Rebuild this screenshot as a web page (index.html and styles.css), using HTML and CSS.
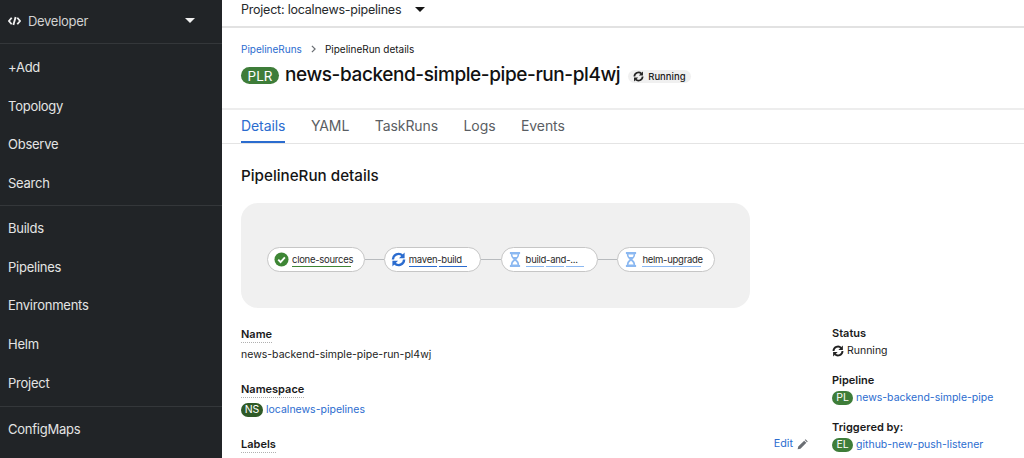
FILE: index.html
```html
<!DOCTYPE html>
<html lang="en">
<head>
<meta charset="utf-8">
<title>PipelineRun details</title>
<link rel="stylesheet" href="styles.css">
</head>
<body>
<div class="app">
  <aside class="sidebar">
    <div class="switcher">
      <svg class="code-icon" viewBox="0 0 14 10" width="13" height="10"><path d="M4 1.500 1 5l3 3.500M10 1.500 13 5l-3 3.500M8.200.6 5.800 9.400" fill="none" stroke="#f0f0f0" stroke-width="2"/></svg>
      <span class="switcher-label">Developer</span>
      <span class="caret caret-light"></span>
    </div>
    <nav class="nav-group">
      <a class="nav-item">+Add</a>
      <a class="nav-item">Topology</a>
      <a class="nav-item">Observe</a>
      <a class="nav-item">Search</a>
    </nav>
    <nav class="nav-group">
      <a class="nav-item">Builds</a>
      <a class="nav-item">Pipelines</a>
      <a class="nav-item">Environments</a>
      <a class="nav-item">Helm</a>
      <a class="nav-item">Project</a>
    </nav>
    <nav class="nav-group">
      <a class="nav-item">ConfigMaps</a>
    </nav>
  </aside>
  <main class="main">
    <div class="project-bar">
      <span>Project: localnews-pipelines</span>
      <span class="caret caret-dark"></span>
    </div>
    <header class="page-head">
      <div class="breadcrumb">
        <a class="link">PipelineRuns</a>
        <svg class="crumb-sep" viewBox="0 0 6 10" width="5" height="8"><path d="M1 1l4 4-4 4" fill="none" stroke="#6a6e73" stroke-width="1.500"/></svg>
        <span>PipelineRun details</span>
      </div>
      <div class="title-row">
        <span class="badge badge-title">PLR</span>
        <h1 class="title">news-backend-simple-pipe-run-pl4wj</h1>
        <span class="status-pill">
          <svg viewBox="0 0 16 16" width="11" height="11"><use href="#sync"/></svg>
          Running
        </span>
      </div>
    </header>
    <div class="tabs">
      <a class="tab tab-active">Details</a>
      <a class="tab">YAML</a>
      <a class="tab">TaskRuns</a>
      <a class="tab">Logs</a>
      <a class="tab">Events</a>
    </div>
    <section class="content">
      <h2 class="section-title">PipelineRun details</h2>
      <div class="graph">
        <div class="node">
          <svg viewBox="0 0 16 16" width="15" height="15"><circle cx="8" cy="8" r="7.500" fill="#3e8635"/><path d="M4.500 8.200 7 10.700l4.600-4.900" fill="none" stroke="#fff" stroke-width="2"/></svg>
          <span class="node-text">clone-sources<span class="bars"><i class="bar green"></i></span></span>
        </div>
        <span class="edge"></span>
        <div class="node">
          <svg class="blue-icon" viewBox="0 0 16 16" width="15" height="15"><use href="#sync"/></svg>
          <span class="node-text">maven-build<span class="bars"><i class="bar blue"></i><i class="bar blue"></i></span></span>
        </div>
        <span class="edge"></span>
        <div class="node">
          <svg class="glass" viewBox="0 0 12 16" width="12" height="15"><use href="#hourglass"/></svg>
          <span class="node-text">build-and-...<span class="bars"><i class="bar pale"></i><i class="bar pale"></i><i class="bar pale"></i></span></span>
        </div>
        <span class="edge"></span>
        <div class="node">
          <svg class="glass" viewBox="0 0 12 16" width="12" height="15"><use href="#hourglass"/></svg>
          <span class="node-text">helm-upgrade<span class="bars"><i class="bar pale"></i></span></span>
        </div>
      </div>
      <div class="details">
        <div class="col-left">
          <div class="field">
            <div class="term dotted">Name</div>
            <div class="value">news-backend-simple-pipe-run-pl4wj</div>
          </div>
          <div class="field">
            <div class="term dotted">Namespace</div>
            <div class="value"><span class="badge badge-ns">NS</span><a class="link">localnews-pipelines</a></div>
          </div>
          <div class="field-labels">
            <div class="term dotted">Labels</div>
            <a class="link edit">Edit
              <svg viewBox="0 0 14 14" width="11" height="11"><path d="M.8 13.200l.8-3.600 7.500-7.500 2.800 2.800-7.500 7.500zM9.900 1.300l1-1 2.800 2.800-1 1z" fill="#6a6e73"/></svg>
            </a>
          </div>
        </div>
        <div class="col-right">
          <div class="field-r">
            <div class="term">Status</div>
            <div class="value status-value"><svg viewBox="0 0 16 16" width="12" height="12"><use href="#sync"/></svg>Running</div>
          </div>
          <div class="field-r">
            <div class="term">Pipeline</div>
            <div class="value"><span class="badge badge-res">PL</span><a class="link">news-backend-simple-pipe</a></div>
          </div>
          <div class="field-last">
            <div class="term">Triggered by:</div>
            <div class="value"><span class="badge badge-res">EL</span><a class="link">github-new-push-listener</a></div>
          </div>
        </div>
      </div>
    </section>
  </main>
</div>
<svg class="defs" width="0" height="0">
  <symbol id="sync" viewBox="0 0 16 16"><path d="M2 8a6 6 0 0 1 10.200-4.200M14 8a6 6 0 0 1-10.200 4.200" fill="none" stroke="currentColor" stroke-width="2.500"/><path d="M14.500.6v6h-6zM1.500 15.400v-6h6z" fill="currentColor"/></symbol>
  <symbol id="hourglass" viewBox="0 0 12 16"><path d="M.5 0h11v2.200h-1c0 3-1.600 4.600-3 5.800 1.400 1.200 3 2.800 3 5.800h1V16H.5v-2.200h1c0-3 1.600-4.600 3-5.800-1.400-1.200-3-2.800-3-5.800h-1z" fill="#8bb8f1"/><path d="M3.200 2.600h5.600c-.1 1.200-.5 2-1 2.600H4.200c-.5-.6-.9-1.400-1-2.600zM6 9.400c1.300 1 2.300 2 2.700 3.800H3.300C3.700 11.400 4.700 10.400 6 9.400z" fill="#fff"/></symbol>
</svg>
</body>
</html>
```
FILE: styles.css
```css
* { box-sizing: border-box; }
html, body { margin: 0; height: 100%; overflow: hidden; }
body { font-family: Inter, "Liberation Sans", sans-serif; font-size: 12px; color: #151515; background: #fff; }
.app { display: flex; height: 458px; }
.defs { position: absolute; }

.sidebar { flex: 0 0 222px; background: #212427; color: #f0f0f0; overflow: hidden; }
.switcher { display: flex; align-items: center; height: 44px; padding: 0 27px 2px 8px; border-bottom: 1px solid #34373a; }
.code-icon { margin-right: 7px; }
.switcher-label { flex: 1; font-size: 13px; letter-spacing: -0.3px; color: #d2d2d2; }
.caret { width: 0; height: 0; border-left: 5px solid transparent; border-right: 5px solid transparent; }
.caret-light { border-top: 5px solid #f0f0f0; }
.caret-dark { border-top: 5px solid #151515; margin-left: 14px; }
.nav-group { padding: 3.500px 0 2.500px; border-bottom: 1px solid #34373a; }
.nav-group + .nav-group { padding: 3px 0 3.500px; }
.nav-group:last-child { border-bottom: 0; padding-top: 3px; }
.nav-item { display: flex; align-items: center; height: 38.700px; padding-left: 8px; font-size: 13px; letter-spacing: -0.25px; color: #e4e4e4; }

.main { flex: 1; min-width: 0; }
.project-bar { display: flex; align-items: center; height: 28px; padding: 0 0 8px 19px; font-size: 12.500px; letter-spacing: -0.22px; color: #26292b; border-bottom: 2px solid #e2e2e2; }
.page-head { height: 82px; padding: 14px 0 0 19px; border-bottom: 2px solid #ededed; }
.breadcrumb { display: flex; align-items: center; gap: 9px; font-size: 10px; height: 14px; }
.link { color: #2b6ccf; }
.title-row { display: flex; align-items: center; margin-top: 5px; height: 27px; }
.badge { display: inline-flex; align-items: center; justify-content: center; color: #fff; border-radius: 10px; }
.badge-title { width: 38px; height: 17px; font-size: 13.500px; background: #3e7d39; margin-right: 6px; margin-top: 2px; }
.title { margin: 0; font-size: 19px; font-weight: 500; letter-spacing: -0.41px; color: #111; }
.status-pill { display: inline-flex; align-items: center; gap: 4px; height: 13px; margin: 3px 0 0 8px; padding: 0 5px; font-size: 9.500px; font-weight: 500; border-radius: 7px; background: #f0f0f0; color: #222; }

.tabs { display: flex; gap: 25.500px; height: 34px; padding-left: 19px; font-size: 14px; letter-spacing: -0.08px; border-bottom: 1px solid #e4e4e4; }
.tab { display: flex; align-items: center; height: 33px; color: #5a5e63; border-bottom: 2px solid transparent; }
.tab-active { color: #2b6ccf; border-bottom-color: #2b6ccf; }

.content { padding: 0 0 0 19px; }
.section-title { margin: 22px 0 0; height: 37px; font-size: 15.200px; line-height: 20px; font-weight: 500; color: #151515; }
.graph { display: flex; align-items: center; width: 509px; height: 105px; padding: 8px 0 0 26px; background: #f0f0f0; border-radius: 17px; }
.node { display: flex; align-items: center; gap: 3px; width: 97.500px; height: 25px; padding-left: 6px; background: #fff; border: 1px solid #c6c6c6; border-radius: 13px; }
.glass { margin: 0 2px 0 1px; }
.node-text { position: relative; font-size: 9.500px; color: #2a2a2a; white-space: nowrap; letter-spacing: -0.27px; }
.bars { position: absolute; left: 0; bottom: -2px; display: flex; gap: 2px; width: 58.500px; }
.bar { flex: 1; height: 1.500px; }
.green { background: #3e8635; }
.blue { background: #2b6ccf; }
.pale { background: #8bb8f1; }
.blue-icon { color: #2b6ccf; }
.edge { width: 19.300px; height: 1px; background: #b8bbbe; }

.details { display: flex; margin-top: 18px; }
.col-left { width: 591px; }
.col-right { flex: 1; margin-top: -1px; }
.field { height: 55px; }
.field-r { height: 47px; }
.term { font-size: 11px; font-weight: 600; height: 16px; line-height: 16px; color: #1a1a1a; }
.dotted { display: inline-block; height: 17px; border-bottom: 1px dotted #b0b0b0; }
.value { display: flex; align-items: center; margin-top: 2px; font-size: 10.500px; line-height: 15px; color: #222; white-space: nowrap; }
.dotted + .value { margin-top: 4px; }
.status-value { gap: 3px; }
.badge-ns, .badge-res { height: 14px; margin-right: 3px; font-size: 10.500px; }
.badge-ns { width: 22px; background: #2f5a27; }
.badge-res { width: 21px; background: #3e7d39; }
.field-labels { display: flex; justify-content: space-between; align-items: flex-start; }
.edit { display: flex; align-items: center; gap: 4px; font-size: 10.800px; line-height: 16px; margin-right: 24px; }
```
